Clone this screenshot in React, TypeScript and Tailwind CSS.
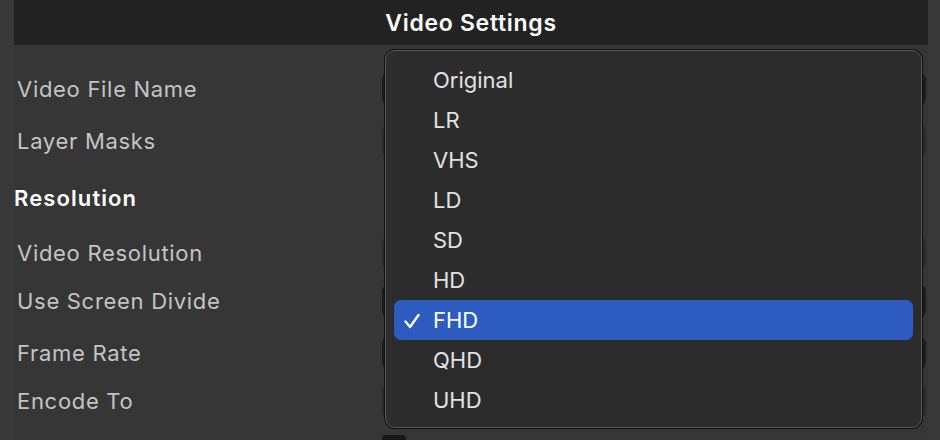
const options = ["Original", "LR", "VHS", "LD", "SD", "HD", "FHD", "QHD", "UHD"]
const selected = "FHD"

const rows = [
  { label: "Video File Name", h: "h-[48px]", field: "bg-[#1c1c1c]" },
  { label: "Layer Masks", h: "h-[56px]", field: "bg-[#2a2a2a]" },
  { label: "Resolution", h: "h-[58px]", section: true },
  { label: "Video Resolution", h: "h-[52px]", field: "bg-[#2a2a2a]" },
  { label: "Use Screen Divide", h: "h-[44px]", field: "bg-[#1c1c1c]" },
  { label: "Frame Rate", h: "h-[60px]", field: "bg-[#1c1c1c]" },
  { label: "Encode To", h: "h-[36px]", field: "bg-[#2a2a2a]" },
]

const Check = () => (
  <svg width="16" height="16" viewBox="0 0 16 16" fill="none">
    <path d="M1.5 8.5 L6 14 L14.5 2" stroke="white" strokeWidth="2.4" strokeLinecap="round" strokeLinejoin="round" />
  </svg>
)

export default function App() {
  return (
    <div className="relative w-[940px] h-[440px] overflow-hidden bg-[#393939] font-['Inter','Liberation_Sans',sans-serif]">
      <div className="ml-[14px] w-[914px] h-full bg-[#363636]">
        <div className="h-[45px] pt-[1px] bg-[#222222] flex items-center justify-center text-[23px] font-semibold text-white tracking-[0.7px]">
          Video Settings
        </div>
        <div className="h-[19px]" />
        {rows.map((r) => (
          <div key={r.label} className={`${r.h} flex items-center pt-[2px]`}>
            {r.section ? (
              <div className="text-[22px] font-semibold text-white tracking-[1.1px]">{r.label}</div>
            ) : (
              <>
                <div className="w-[368px] pl-[3px] text-[22px] text-[#c4c4c4] tracking-[0.7px]">{r.label}</div>
                <div className={`w-[544px] h-[32px] rounded-md ${r.field}`} />
              </>
            )}
          </div>
        ))}
        <div className="flex pl-[368px] pt-[17px]">
          <div className="w-[24px] h-[24px] rounded bg-[#161616]" />
        </div>
      </div>

      {/* dropdown menu */}
      <div className="absolute left-[385px] top-[50px] w-[537px] h-[378px] rounded-[10px] bg-[#2c2c2c] border border-[#5a5a5a] shadow-[0_0_0_1px_#111] pt-[9px] px-[8px]">
        {options.map((o) => (
          <div
            key={o}
            className={`h-[40px] flex items-center pt-[1px] rounded-[7px] text-[22px] ${
              o === selected ? "bg-[#2e5bbf] text-white" : "text-[#e2e2e2]"
            }`}
          >
            <div className="w-[39px] flex justify-end pr-[13px]">{o === selected && <Check />}</div>
            <span>{o}</span>
          </div>
        ))}
      </div>
    </div>
  )
}
